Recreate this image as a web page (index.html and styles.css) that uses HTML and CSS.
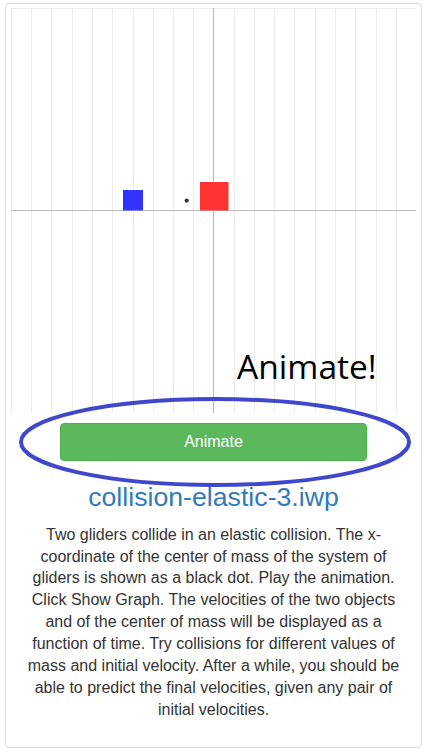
FILE: index.html
```html
<!DOCTYPE html>
<html>
<head>
<meta charset="utf-8">
<link rel="stylesheet" href="styles.css">
</head>
<body>
<div class="card">
  <svg class="stage" width="405" height="405" viewBox="0 0 405 405">
    <g class="grid">
      <line x1="0" y1="0.5" x2="405" y2="0.5"/>
      <line x1="0.5" y1="0" x2="0.5" y2="405"/>
      <line x1="20.5" y1="0" x2="20.5" y2="405"/>
      <line x1="40.5" y1="0" x2="40.5" y2="405"/>
      <line x1="61.5" y1="0" x2="61.5" y2="405"/>
      <line x1="81.5" y1="0" x2="81.5" y2="405"/>
      <line x1="101.5" y1="0" x2="101.5" y2="405"/>
      <line x1="122.5" y1="0" x2="122.5" y2="405"/>
      <line x1="142.5" y1="0" x2="142.5" y2="405"/>
      <line x1="162.5" y1="0" x2="162.5" y2="405"/>
      <line x1="182.5" y1="0" x2="182.5" y2="405"/>
      <line x1="223.5" y1="0" x2="223.5" y2="405"/>
      <line x1="243.5" y1="0" x2="243.5" y2="405"/>
      <line x1="263.5" y1="0" x2="263.5" y2="405"/>
      <line x1="283.5" y1="0" x2="283.5" y2="405"/>
      <line x1="304.5" y1="0" x2="304.5" y2="405"/>
      <line x1="324.5" y1="0" x2="324.5" y2="405"/>
      <line x1="344.5" y1="0" x2="344.5" y2="405"/>
      <line x1="365.5" y1="0" x2="365.5" y2="405"/>
      <line x1="385.5" y1="0" x2="385.5" y2="405"/>
    </g>
    <g class="axes">
      <line x1="0" y1="202.5" x2="405" y2="202.5"/>
      <line x1="202.5" y1="0" x2="202.5" y2="405"/>
    </g>
    <rect class="blue" x="112" y="182" width="20" height="20.5"/>
    <rect class="red" x="189" y="174" width="28.5" height="28.5"/>
    <circle class="cm" cx="175.7" cy="192.6" r="2.1"/>
    <text class="label" x="226" y="371">Animate!</text>
  </svg>
  <button class="btn">Animate</button>
  <h3 class="title">collision-elastic-3.iwp</h3>
  <p class="desc">Two gliders collide in an elastic collision. The x-coordinate of the center of mass of the system of gliders is shown as a black dot. Play the animation. Click Show Graph. The velocities of the two objects and of the center of mass will be displayed as a function of time. Try collisions for different values of mass and initial velocity. After a while, you should be able to predict the final velocities, given any pair of initial velocities.</p>
  <svg class="ring" width="396" height="94" viewBox="0 0 396 94">
    <ellipse cx="198" cy="47" rx="194" ry="43"/>
  </svg>
</div>
</body>
</html>
```

FILE: styles.css
```css
html, body {
  margin: 0;
  padding: 0;
  background: #fff;
}

body {
  font-family: "Liberation Sans", Arial, sans-serif;
  color: #333;
}

.card {
  position: relative;
  margin: 3px 6px 0 5px;
  border: 1px solid #dddddd;
  border-radius: 4px;
  padding: 4px 5px 26px 5px;
  display: flex;
  flex-direction: column;
  align-items: center;
}

.stage {
  display: block;
  width: 405px;
  height: 405px;
}

.grid line {
  stroke: #ececec;
  stroke-width: 1;
}

.axes line {
  stroke: #bdbdbd;
  stroke-width: 1.2;
}

.blue {
  fill: #3333ff;
}

.red {
  fill: #ff3333;
}

.cm {
  fill: #333;
}

.label {
  font-family: "Open Sans", "Noto Sans", sans-serif;
  font-size: 33.6px;
  fill: #000;
}

.btn {
  margin-top: 10px;
  width: 307px;
  height: 38px;
  background: #5cb85c;
  border: 1px solid #4cae4c;
  border-radius: 4px;
  color: #fff;
  font-family: "Liberation Sans", Arial, sans-serif;
  font-size: 16px;
  padding: 0;
}

.title {
  margin: 22px 0 0 0;
  font-weight: normal;
  font-size: 26.7px;
  line-height: 28.6px;
  color: #337ab7;
  text-align: center;
}

.desc {
  margin: 12px 0 0 0;
  padding: 0 15px;
  font-size: 16px;
  line-height: 21.9px;
  text-align: center;
  color: #333;
}

.ring {
  position: absolute;
  left: 11px;
  top: 391px;
  overflow: visible;
}

.ring ellipse {
  fill: none;
  stroke: #3f48cc;
  stroke-width: 4;
}
```
